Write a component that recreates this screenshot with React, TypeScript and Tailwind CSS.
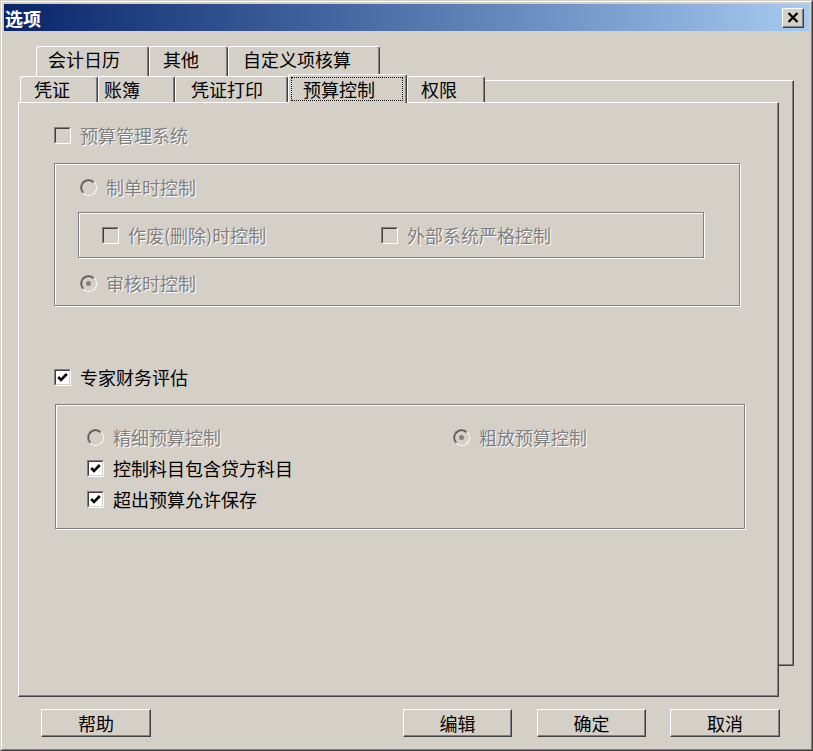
import React from "react";

const off = "text-[#808080] [text-shadow:1px_1px_0_#ffffff]";

function Check({ on, disabled }: { on?: boolean; disabled?: boolean }) {
  return (
    <span className="flex h-[17px] w-[17px] shrink-0 border border-t-[#808080] border-l-[#808080] border-r-white border-b-white">
      <span
        className={`flex flex-1 items-center justify-center border border-t-[#404040] border-l-[#404040] border-r-[#d4d0c8] border-b-[#d4d0c8] ${
          disabled ? "bg-[#d4d0c8]" : "bg-white"
        }`}
      >
        {on && (
          <svg width="13" height="13" viewBox="0 0 13 13">
            <path d="M2.2 6 L5 8.8 L10.8 3" fill="none" stroke={disabled ? "#808080" : "#000"} strokeWidth="2.6" />
          </svg>
        )}
      </span>
    </span>
  );
}

function Radio({ on }: { on?: boolean }) {
  return (
    <span className="flex h-[17px] w-[17px] shrink-0 rounded-full border border-t-[#808080] border-l-[#808080] border-r-white border-b-white">
      <span className="flex flex-1 items-center justify-center rounded-full border border-t-[#404040] border-l-[#404040] border-r-[#d4d0c8] border-b-[#d4d0c8] bg-[#d4d0c8]">
        {on && <span className="h-[5px] w-[5px] rounded-full bg-[#808080]" />}
      </span>
    </span>
  );
}

function Option({
  kind,
  label,
  on,
  disabled,
  className = "",
}: {
  kind: "check" | "radio";
  label: string;
  on?: boolean;
  disabled?: boolean;
  className?: string;
}) {
  return (
    <div className={`flex h-[18px] items-center ${className}`}>
      {kind === "check" ? <Check on={on} disabled={disabled} /> : <Radio on={on} />}
      <span className={`ml-[9px] text-[18px] leading-none whitespace-nowrap ${disabled ? off : "text-black"}`}>
        {label}
      </span>
    </div>
  );
}

function Tab({ label, w, pl, back }: { label: string; w: number; pl: number; back?: boolean }) {
  return (
    <div
      className={`flex shrink-0 items-start rounded-t-[3px] border-t border-l border-r border-t-white border-l-white border-r-[#404040] bg-[#d4d0c8] shadow-[inset_-1px_0_0_#808080] text-[18px] leading-none text-black ${
        back ? "h-[34px] pt-[3px]" : "h-[26px] pt-[3px]"
      }`}
      style={{ width: w, paddingLeft: pl }}
    >
      {label}
    </div>
  );
}

function Button({ label, w, className = "" }: { label: string; w: number; className?: string }) {
  return (
    <div
      className={`flex h-[28px] items-center justify-center border border-t-white border-l-white border-r-[#404040] border-b-[#404040] bg-[#d4d0c8] shadow-[inset_-1px_-1px_0_#808080] text-[18px] leading-none text-black ${className}`}
      style={{ width: w }}
    >
      {label}
    </div>
  );
}

export default function App() {
  return (
    <div className="h-[751px] w-[813px] border border-t-[#d4d0c8] border-l-[#d4d0c8] border-r-[#404040] border-b-[#404040] bg-[#d4d0c8] font-['Noto_Sans_CJK_SC','Noto_Sans',sans-serif]">
      <div className="flex h-full flex-col border border-t-white border-l-white border-r-[#808080] border-b-[#808080] p-[2px]">
        {/* title bar */}
        <div className="flex h-[27px] shrink-0 items-center justify-between bg-linear-to-r from-[#0a246a] to-[#a6caf0] pl-[1px] pr-[5px]">
          <span className="text-[18px] font-bold leading-none text-white">选项</span>
          <div className="flex h-[20px] w-[22px] items-center justify-center border border-t-white border-l-white border-r-[#404040] border-b-[#404040] bg-[#d4d0c8] shadow-[inset_-1px_-1px_0_#808080]">
            <svg width="12" height="11" viewBox="0 0 12 11">
              <path d="M1.5 1 L10.5 10 M10.5 1 L1.5 10" stroke="#000" strokeWidth="2.2" />
            </svg>
          </div>
        </div>

        {/* tab control */}
        <div className="mt-[15px] grid">
          {/* back row + back sheet */}
          <div className="col-start-1 row-start-1 ml-[32px] mr-[15px] flex flex-col">
            <div className="flex h-[34px]">
              <Tab back label="会计日历" w={113} pl={11} />
              <Tab back label="其他" w={79} pl={13} />
              <Tab back label="自定义项核算" w={152} pl={14} />
            </div>
            <div className="h-[586px] border-t border-r border-b border-t-white border-r-[#404040] border-b-[#404040] shadow-[inset_-1px_-1px_0_#808080]" />
          </div>

          {/* front row + page */}
          <div className="col-start-1 row-start-1 mt-[30px] ml-[14px] mr-[30px] flex flex-col">
            <div className="flex h-[26px] items-end pl-[2px]">
              <Tab label="凭证" w={78} pl={13} />
              <Tab label="账簿" w={77} pl={5} />
              <Tab label="凭证打印" w={113} pl={15} />
              <div className="relative z-10 -mb-px flex h-[29px] w-[119px] shrink-0 rounded-t-[3px] border-t border-l border-r border-t-white border-l-white border-r-[#404040] bg-[#d4d0c8] p-[2px] pr-[3px] shadow-[inset_-1px_0_0_#808080]">
                <div className="flex flex-1 items-start border border-dotted border-black pl-[11px] pt-[2px] text-[18px] leading-none text-black">
                  预算控制
                </div>
              </div>
              <Tab label="权限" w={78} pl={13} />
            </div>

            <div className="h-[595px] border border-t-white border-l-white border-r-[#404040] border-b-[#404040] bg-[#d4d0c8] pl-[35px] pt-[23px] shadow-[inset_-1px_-1px_0_#808080]">
              <Option kind="check" label="预算管理系统" disabled />

              <div className="mt-[19px] h-[143px] w-[686px] border border-[#808080] pt-[14px] shadow-[1px_1px_0_#ffffff,inset_1px_1px_0_#ffffff]">
                <Option kind="radio" label="制单时控制" disabled className="ml-[25px]" />
                <div className="mt-[16px] ml-[23px] flex h-[46px] w-[626px] items-center border border-[#808080] pl-[23px] shadow-[1px_1px_0_#ffffff,inset_1px_1px_0_#ffffff]">
                  <Option kind="check" label="作废(删除)时控制" disabled className="w-[279px]" />
                  <Option kind="check" label="外部系统严格控制" disabled />
                </div>
                <Option kind="radio" label="审核时控制" on disabled className="mt-[16px] ml-[25px]" />
              </div>

              <Option kind="check" label="专家财务评估" on className="mt-[62px]" />

              <div className="mt-[18px] ml-[1px] h-[125px] w-[690px] border border-[#808080] pt-[23px] shadow-[1px_1px_0_#ffffff,inset_1px_1px_0_#ffffff]">
                <div className="ml-[31px] flex">
                  <Option kind="radio" label="精细预算控制" disabled className="w-[366px]" />
                  <Option kind="radio" label="粗放预算控制" on disabled />
                </div>
                <Option kind="check" label="控制科目包含贷方科目" on className="mt-[13px] ml-[31px]" />
                <Option kind="check" label="超出预算允许保存" on className="mt-[13px] ml-[31px]" />
              </div>
            </div>
          </div>
        </div>

        {/* buttons */}
        <div className="mt-[12px] flex">
          <Button label="帮助" w={110} className="ml-[37px]" />
          <div className="flex-1" />
          <Button label="编辑" w={109} />
          <Button label="确定" w={109} className="ml-[25px]" />
          <Button label="取消" w={110} className="ml-[24px] mr-[29px]" />
        </div>
      </div>
    </div>
  );
}
